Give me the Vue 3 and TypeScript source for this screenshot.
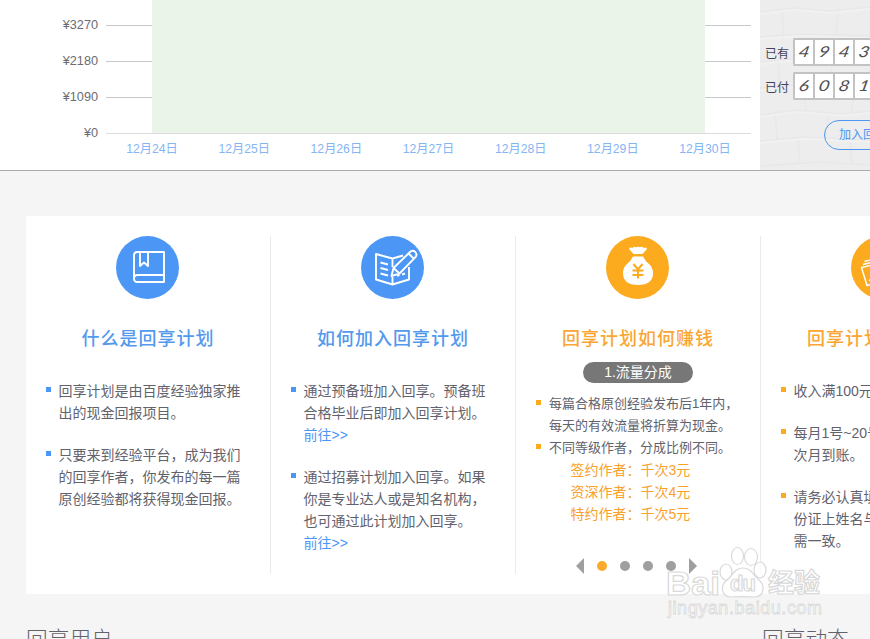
<script setup lang="ts">
interface Block {
  lines: string[]
  link?: string
}
interface Column {
  title: string
  tone: 'blue' | 'orange'
  icon: 'book' | 'write' | 'bag' | 'cash'
  blocks: Block[]
}

const yTicks = [
  { label: '¥3270', y: 25.5 },
  { label: '¥2180', y: 61.5 },
  { label: '¥1090', y: 97.5 },
  { label: '¥0', y: 133.5 },
]
const days = [24, 25, 26, 27, 28, 29, 30]
const dayX = (i: number): number => 152 + i * 92.17

const counters = [
  { label: '已有', digits: ['4', '9', '4', '3'] },
  { label: '已付', digits: ['6', '0', '8', '1'] },
]

const columns: Column[] = [
  {
    title: '什么是回享计划',
    tone: 'blue',
    icon: 'book',
    blocks: [
      { lines: ['回享计划是由百度经验独家推', '出的现金回报项目。'] },
      { lines: ['只要来到经验平台，成为我们', '的回享作者，你发布的每一篇', '原创经验都将获得现金回报。'] },
    ],
  },
  {
    title: '如何加入回享计划',
    tone: 'blue',
    icon: 'write',
    blocks: [
      { lines: ['通过预备班加入回享。预备班', '合格毕业后即加入回享计划。'], link: '前往>>' },
      { lines: ['通过招募计划加入回享。如果', '你是专业达人或是知名机构，', '也可通过此计划加入回享。'], link: '前往>>' },
    ],
  },
  { title: '回享计划如何赚钱', tone: 'orange', icon: 'bag', blocks: [] },
  {
    title: '回享计划',
    tone: 'orange',
    icon: 'cash',
    blocks: [
      { lines: ['收入满100元'] },
      { lines: ['每月1号~20号', '次月到账。'] },
      { lines: ['请务必认真填', '份证上姓名与', '需一致。'] },
    ],
  },
]

const rules: string[][] = [
  ['每篇合格原创经验发布后1年内，', '每天的有效流量将折算为现金。'],
  ['不同等级作者，分成比例不同。'],
]
const rates = ['签约作者：千次3元', '资深作者：千次4元', '特约作者：千次5元']
</script>

<template>
  <div class="page">
    <section class="top">
      <svg class="chart" width="760" height="170" viewBox="0 0 760 170">
        <g v-for="t in yTicks" :key="t.label">
          <line x1="106" x2="751" :y1="t.y" :y2="t.y" :class="t.y > 130 ? 'axis' : 'grid'" />
          <text class="ylab" x="98" :y="t.y + 3.5">{{ t.label }}</text>
        </g>
        <rect class="area" x="152" y="0" width="553" height="133" />
        <text v-for="(d, i) in days" :key="d" class="xlab" :x="dayX(i)" y="153">12月{{ d }}日</text>
      </svg>
      <aside class="side">
        <svg class="bricks" width="110" height="170" viewBox="0 0 110 170">
          <g class="mortar">
            <path d="M0 12L34 8L70 11L110 7M0 37L40 34L110 36M0 62L28 59L74 63L110 60M0 88L50 84L110 87M0 115L36 110L82 114L110 111M0 141L44 137L110 140M0 166L60 162L110 165" />
            <path d="M22 10L24 35M78 10L76 34M48 35L46 61M98 36L99 60M18 61L20 87M72 62L70 85M44 86L46 112M94 87L92 112M15 113L17 139M68 113L66 138M38 139L40 164M90 140L92 164" />
          </g>
          <g class="shine">
            <path d="M0 14L34 10L70 13L110 9M0 39L40 36L110 38M0 64L28 61L74 65L110 62M0 90L50 86L110 89M0 117L36 112L82 116L110 113M0 143L44 139L110 142" />
          </g>
        </svg>
        <div class="side-body">
          <div v-for="c in counters" :key="c.label" class="counter">
            <span class="clabel">{{ c.label }}</span>
            <div class="digits">
              <span v-for="(d, i) in c.digits" :key="i" class="cell"><span class="digit">{{ d }}</span></span>
            </div>
          </div>
          <a class="join">加入回</a>
        </div>
      </aside>
    </section>

    <section class="panel">
      <article v-for="col in columns" :key="col.icon" class="col" :class="[col.tone, col.icon]">
        <svg class="icon" width="63" height="63" viewBox="0 0 63 63">
          <circle class="disc" cx="31.5" cy="31.5" r="31.5" />
          <g v-if="col.icon === 'book'" class="stroke">
            <path d="M48 16H21.5Q18 16 18 19.5V42.5Q18 46 21.5 46H48Z" />
            <path d="M48 39H21.5Q18 39 18 42.5" />
            <path d="M24 16V30L28 26.5L32 30V16" />
          </g>
          <g v-else-if="col.icon === 'write'" class="stroke">
            <path d="M31.500 22.500L15 18V43.500L31.500 48.500L48 43.500V31M31.500 22.500L42 19.500M31.500 22.500V31M31.500 41V48.500" />
            <path d="M19.500 26.500L27 28.500M19.500 32L27 34M19.500 37.500L27 39.500M36 39.800L38.500 39M41 38.500L44 37.500" />
            <path class="pen" d="M30.500 40L32.500 32L48.500 16.500Q51.500 13.500 54.300 16Q56.800 19 54 21.700L38.500 37.500ZM32.500 32L38.500 37.500M47.500 17.500L53 22.700" />
          </g>
          <g v-else-if="col.icon === 'bag'">
            <path class="fill" d="M23 13Q24 10.800 26.500 12Q28 10 30 11.300Q32 10 34 11.300Q36 10 37.500 12Q40 10.800 41 13L36.500 18H27.500Z" />
            <path class="fill" d="M27 20.500H37Q39 25 43.500 28.500Q47 32 47 37Q47 49 32 49Q17 49 17 37Q17 32 20.500 28.500Q25 25 27 20.500Z" />
            <path class="yen" d="M27.500 28L32 33.500L36.500 28M32 33V42.500M26.500 34.500H37.500M26.500 39H37.500" />
          </g>
          <g v-else class="stroke thin">
            <path d="M10.500 31.500L26 28L31 45L16 49.500ZM12 28.500L28 24.500M13.500 25.500L28 21.500" />
            <path d="M18 44.500L22 43" />
          </g>
        </svg>
        <h3 class="title">{{ col.title }}</h3>

        <ul v-if="col.icon !== 'bag'" class="list">
          <li v-for="(b, i) in col.blocks" :key="i">
            <p v-for="l in b.lines" :key="l">{{ l }}</p>
            <p v-if="b.link"><a class="link">{{ b.link }}</a></p>
          </li>
        </ul>
        <template v-else>
          <div class="pill">1.流量分成</div>
          <ul class="list compact">
            <li v-for="(r, i) in rules" :key="i">
              <p v-for="l in r" :key="l">{{ l }}</p>
            </li>
          </ul>
          <div class="rates">
            <p v-for="r in rates" :key="r">{{ r }}</p>
          </div>
          <div class="pager">
            <i class="arrow prev"></i>
            <i v-for="n in 4" :key="n" class="dot" :class="{ on: n === 1 }"></i>
            <i class="arrow next"></i>
          </div>
        </template>
      </article>
    </section>

    <section class="foot">
      <h2>回享用户</h2>
      <h2>回享动态</h2>
    </section>

    <svg class="mark" width="164" height="84" viewBox="0 0 164 84">
      <text class="m1" x="-1" y="58" textLength="54" lengthAdjust="spacingAndGlyphs">Bai</text>
      <g class="paw">
        <ellipse cx="59" cy="35" rx="6" ry="8" />
        <ellipse cx="70.500" cy="19" rx="6" ry="8.500" />
        <ellipse cx="84" cy="20" rx="6.500" ry="8.500" />
        <ellipse cx="93" cy="33" rx="6" ry="8" />
        <path d="M76 31C68 31 66 38 60 43C53 48 54 60 64 60C71 59.500 81 59.500 87 60C98 60 98 48 92 43C86 38 84 31 76 31Z" />
      </g>
      <text class="m2" x="63" y="54" textLength="26">du</text>
      <text class="m3" x="101" y="55" textLength="52">经验</text>
      <text class="m4" x="1" y="77" textLength="154">jingyan.baidu.com</text>
    </svg>
  </div>
</template>

<style>
body {
  overflow: hidden;
  background: #f5f5f5;
}
</style>

<style scoped>
.page {
  position: relative;
  width: 870px;
  height: 639px;
  overflow: hidden;
  background: #f5f5f5;
  color: #62626c;
  font-family: "Liberation Sans", "Noto Sans CJK SC", sans-serif;
  font-size: 14px;
  font-weight: 400;
}
h2, h3, p, ul {
  margin: 0;
  padding: 0;
}
.top {
  display: flex;
  height: 170px;
  background: #fff;
  border-bottom: 1px solid #aaa;
}
.chart {
  flex: none;
  display: block;
}
.grid { stroke: #c8c8cb; }
.axis { stroke: #dcdcdc; }
.area { fill: #eaf4e9; }
.ylab {
  text-anchor: end;
  font-size: 12.7px;
  fill: #6c6c72;
}
.xlab {
  text-anchor: middle;
  font-size: 12.2px;
  fill: #86b5f4;
}
.side {
  display: grid;
  flex: none;
  width: 110px;
  overflow: hidden;
  background: #ededed;
}
.bricks, .side-body { grid-area: 1 / 1; }
.mortar { fill: none; stroke: #e8e8e8; stroke-width: 1.6; }
.shine { fill: none; stroke: #f1f1f1; stroke-width: 2; }
.side-body {
  display: flex;
  flex-direction: column;
  align-items: flex-start;
  gap: 6px;
  padding: 38px 0 0 5px;
  color: #424260;
}
.counter {
  display: flex;
  align-items: center;
  height: 28px;
}
.clabel {
  width: 28px;
  font-size: 12px;
}
.digits {
  display: flex;
  border: 2px solid #c3c3c3;
  border-right: 0;
  border-radius: 2px;
}
.cell {
  display: flex;
  box-sizing: border-box;
  justify-content: center;
  width: 20px;
  height: 24px;
  border-right: 2px solid #c3c3c3;
  background: #fff;
}
.digit {
  color: #505050;
  font: italic 400 15px/23px Lato, sans-serif;
  transform: skewX(-12deg) scaleX(1.25);
}
.join {
  box-sizing: border-box;
  width: 82px;
  height: 30px;
  margin: 14px 0 0 59px;
  padding-left: 14px;
  border: 1px solid #4c97f5;
  border-radius: 15px;
  color: #4c97f5;
  font-size: 12px;
  line-height: 28px;
  white-space: nowrap;
}
.panel {
  display: flex;
  width: 980px;
  height: 338px;
  margin: 45px 0 0 26px;
  padding: 20px 0;
  background: #fff;
}
.col {
  box-sizing: border-box;
  flex: none;
  width: 245px;
  border-right: 1px solid #ebebeb;
}
.blue { --tone: #4c97f5; }
.orange { --tone: #fcaa1e; }
.icon {
  display: block;
  margin-left: 90px;
}
.disc { fill: var(--tone); }
.stroke {
  fill: none;
  stroke: #fff;
  stroke-width: 1.9;
  stroke-linejoin: round;
}
.thin { stroke-width: 1.5; }
.pen { fill: var(--tone); }
.fill { fill: #fff; }
.yen { fill: none; stroke: var(--tone); stroke-width: 2; }
.title {
  height: 26px;
  margin-top: 27px;
  color: var(--tone);
  font-size: 18px;
  font-weight: 500;
  line-height: 27px;
  letter-spacing: 1px;
  text-align: center;
  white-space: nowrap;
}
.cash .title {
  padding-left: 46px;
  text-align: left;
}
.blue .title { color: #5399ee; }
.orange .title { color: #fba632; }
.list {
  display: flex;
  flex-direction: column;
  gap: 20px;
  margin-top: 28px;
  list-style: none;
}
.list li {
  padding-left: 32.5px;
  background: linear-gradient(var(--tone), var(--tone)) 20px 7px / 5px 5px no-repeat;
}
.list p, .rates p {
  height: 22px;
  line-height: 22px;
  white-space: nowrap;
}
.link { color: #4c97f5; }
.pill {
  width: 110px;
  height: 21px;
  margin: 10px 0 0 67px;
  border-radius: 11px;
  background: #777;
  color: #fff;
  line-height: 21px;
  text-align: center;
}
.compact {
  gap: 0;
  margin-top: 10px;
  font-size: 13px;
}
.compact li { padding-left: 33px; }
.rates {
  padding-left: 54.5px;
  color: #f9a12b;
}
.pager {
  display: flex;
  align-items: center;
  gap: 13px;
  height: 16px;
  margin: 33px 0 0 60px;
}
.dot {
  width: 10px;
  height: 10px;
  border-radius: 50%;
  background: #9f9f9f;
}
.dot.on { background: #fcaa2e; }
.arrow {
  width: 8px;
  height: 16px;
  background: #9f9f9f;
}
.prev { clip-path: polygon(100% 0, 100% 100%, 0 50%); }
.next { clip-path: polygon(0 0, 0 100%, 100% 50%); }
.foot {
  display: grid;
  grid-template-columns: 736px 200px;
  padding: 30px 0 0 26px;
}
.foot h2 {
  font-size: 21.7px;
  font-weight: 300;
  line-height: 32px;
}
.mark {
  position: absolute;
  left: 667px;
  top: 537px;
}
.mark text, .paw {
  fill: #fff;
  fill-opacity: 0.75;
  stroke: #d9d9d9;
  stroke-width: 1.2;
}
.m1 { font: bold 34px "Liberation Sans", sans-serif; }
.m2 { font: bold 22px "Liberation Sans", sans-serif; }
.m3 { font: bold 26px "Noto Sans CJK SC", sans-serif; }
.m4 { font: 18px "Liberation Sans", sans-serif; }
.mark .m4 { stroke-width: 0.8; }
</style>
